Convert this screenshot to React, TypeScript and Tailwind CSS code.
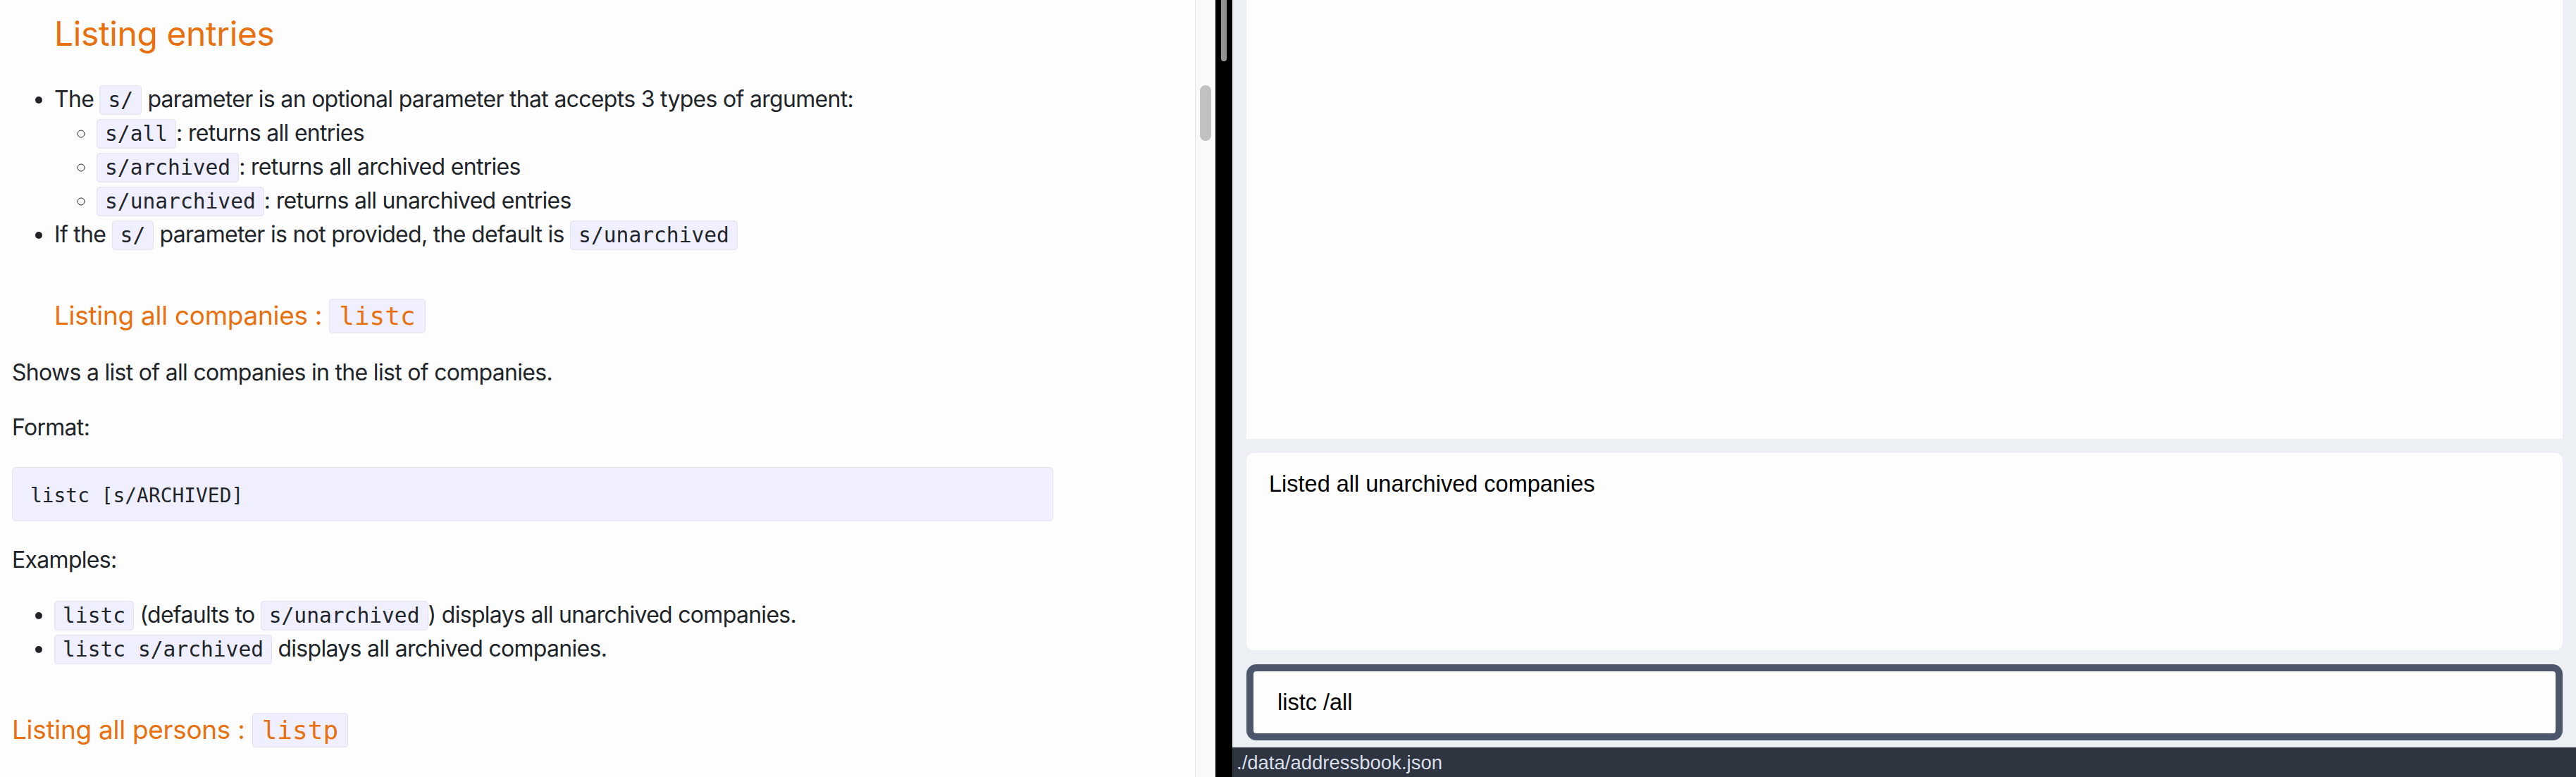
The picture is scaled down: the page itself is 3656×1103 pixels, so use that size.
import React from "react";

const docFont = { fontFamily: "Inter, 'Noto Sans', 'Liberation Sans', sans-serif" };

function Code({ children, big = false }: { children: React.ReactNode; big?: boolean }) {
  return (
    <code
      className={[
        "rounded-[5px] border border-[#e3e3ee] bg-[#efefff] leading-none tracking-normal [font-family:'DejaVu_Sans_Mono',monospace]",
        big ? "px-[13px] py-[3px] text-[36px]" : "px-[11px] py-[3px] text-[29.6px]",
      ].join(" ")}
    >
      {children}
    </code>
  );
}

function DocPane() {
  return (
    <div className="h-full w-[1696px] shrink-0 overflow-hidden bg-[#fdfdfd] text-[#212529]" style={docFont}>
      <div className="pl-[17px] pr-[200px]">
        <h2 className="ml-[60px] pt-[19px] text-[48px] leading-[1.2] font-normal tracking-[-0.4px] text-[#e8700f]">
          Listing entries
        </h2>

        <ul className="mt-[40px] list-disc pl-[60px] text-[32px] leading-[48px] tracking-[-0.7px]">
          <li>
            The <Code>s/</Code> parameter is an optional parameter that accepts 3 types of argument:
            <ul className="list-[circle] pl-[60px]">
              <li>
                <Code>s/all</Code>: returns all entries
              </li>
              <li>
                <Code>s/archived</Code>: returns all archived entries
              </li>
              <li>
                <Code>s/unarchived</Code>: returns all unarchived entries
              </li>
            </ul>
          </li>
          <li>
            If the <Code>s/</Code> parameter is not provided, the default is <Code>s/unarchived</Code>
          </li>
        </ul>

        <h5 className="ml-[60px] mt-[67px] text-[37px] leading-[48px] font-normal tracking-[-0.3px] text-[#e8700f]">
          Listing all companies : <Code big>listc</Code>
        </h5>

        <p className="mt-[33px] text-[32px] leading-[48px] tracking-[-0.7px]">
          Shows a list of all companies in the list of companies.
        </p>

        <p className="mt-[30px] text-[32px] leading-[48px] tracking-[-0.7px]">Format:</p>

        <pre className="mt-[32px] w-[1478px] rounded-[6px] border border-[#e3e3ee] bg-[#efefff] pl-[25px] pt-[19px] pb-[15px] text-[27.9px] leading-[1.5] [font-family:'DejaVu_Sans_Mono',monospace]">
          listc [s/ARCHIVED]
        </pre>

        <p className="mt-[31px] text-[32px] leading-[48px] tracking-[-0.7px]">Examples:</p>

        <ul className="mt-[30px] list-disc pl-[60px] text-[32px] leading-[48px] tracking-[-0.7px]">
          <li>
            <Code>listc</Code> (defaults to <Code>s/unarchived</Code>) displays all unarchived companies.
          </li>
          <li>
            <Code>listc s/archived</Code> displays all archived companies.
          </li>
        </ul>

        <h5 className="mt-[67px] text-[37px] leading-[48px] font-normal tracking-[-0.3px] text-[#e8700f]">
          Listing all persons : <Code big>listp</Code>
        </h5>
      </div>
    </div>
  );
}

export default function App() {
  return (
    <div className="flex h-[1103px] w-[3656px] overflow-hidden">
      <DocPane />

      {/* doc scrollbar */}
      <div className="h-full w-[29px] shrink-0 border-l border-[#e4e4e4] bg-[#f9f9f9] pt-[121px] pl-[6px]">
        <div className="h-[79px] w-[16px] rounded-full bg-[#c1c1c1]" />
      </div>

      {/* black gutter */}
      <div className="h-full w-[24px] shrink-0 bg-black pl-[8px]">
        <div className="h-[87px] w-[8px] rounded-b-full bg-[#939393]" />
      </div>

      {/* app window */}
      <div
        className="flex h-full flex-1 flex-col bg-[#eceff4]"
        style={{ fontFamily: "'Liberation Sans', Arial, sans-serif" }}
      >
        <div className="flex flex-col pl-[20px] pr-[19px]">
          <div className="h-[623px] bg-[#fdfdfd]" />

          <div className="mt-[20px] h-[280px] rounded-[10px] bg-[#fdfdfd] pl-[32px] pt-[25px] text-[32.5px] leading-[38px] text-black">
            Listed all unarchived companies
          </div>

          <div className="mt-[20px] flex h-[108px] items-center rounded-[14px] border-[10px] border-[#4c566a] bg-[#fdfdfd] pl-[34px] text-[32.5px] text-black">
            listc /all
          </div>
        </div>

        <div className="mt-[10px] h-[42px] bg-[#2e3440] pl-[6px] pt-[6px] text-[27.5px] leading-[32px] text-[#d8dee9]">
          ./data/addressbook.json
        </div>
      </div>
    </div>
  );
}
